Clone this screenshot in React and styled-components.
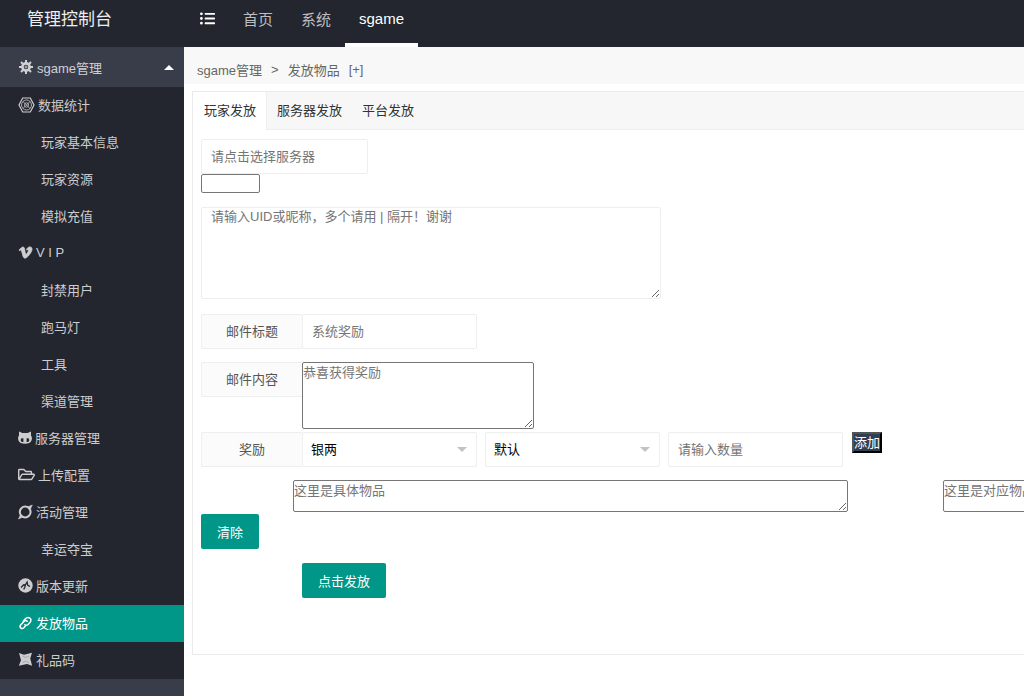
import styled, { createGlobalStyle } from "styled-components";
import { FaListUl, FaRegFolderOpen, FaVimeoV } from "react-icons/fa";

const GlobalStyle = createGlobalStyle`
  * {
    box-sizing: border-box;
  }
  body {
    margin: 0;
    background: #fff;
    overflow: hidden;
  }
  body, button, input, select, textarea {
    font-family: "Liberation Sans", "Noto Sans CJK SC", sans-serif;
    font-size: 13px;
  }
`;

const Page = styled.div`
  display: flex;
  flex-direction: column;
  height: 100vh;
`;

const Header = styled.header`
  display: flex;
  flex: none;
  height: 47px;
  background: #23262e;
`;

const Logo = styled.div`
  width: 186px;
  padding-left: 27px;
  color: #eee;
  font-size: 17px;
  line-height: 40px;
`;

const TopNav = styled.nav`
  display: flex;
`;

const TopLink = styled.a`
  display: flex;
  align-items: center;
  padding: 0 14px 7px;
  border-bottom: 4px solid ${({ $active }) => ($active ? "#fff" : "transparent")};
  color: ${({ $active }) => ($active ? "#fff" : "#bdbec0")};
  font-size: 15px;
  text-decoration: none;
`;

const Body = styled.div`
  display: flex;
  flex: 1;
  min-height: 0;
`;

const Sidebar = styled.nav`
  flex: none;
  width: 184px;
  background: #393d49;
`;

const Group = styled.a`
  display: flex;
  align-items: center;
  gap: 4px;
  height: 40px;
  padding: 0 10px 0 19px;
  color: #cfd0d3;
  text-decoration: none;

  &::after {
    content: "";
    margin-left: auto;
    border: 5px solid transparent;
    border-top-width: 0;
    border-bottom-color: #fff;
  }
`;

const Menu = styled.ul`
  margin: 0;
  padding: 0;
  list-style: none;
  background: #23262e;
`;

const MenuLink = styled.a`
  display: flex;
  align-items: center;
  gap: 3px;
  height: 37px;
  padding: 0 0 2px ${({ $child }) => ($child ? "41px" : "18px")};
  background: ${({ $active }) => ($active ? "#009688" : "transparent")};
  color: ${({ $active }) => ($active ? "#fff" : "#cccdcf")};
  text-decoration: none;
`;

const Main = styled.main`
  flex: 1;
  min-width: 0;
  overflow: hidden;
`;

const Breadcrumb = styled.div`
  display: flex;
  align-items: center;
  gap: 9px;
  height: 37px;
  padding: 8px 13px 0;
  background: #f8f8f8;
  color: #666;

  a {
    color: inherit;
    text-decoration: none;
  }
`;

const Panel = styled.section`
  margin: 7px 0 0 8px;
  border: 1px solid #eaeaea;
  border-right: 0;
`;

const Tabs = styled.div`
  display: flex;
  height: 38px;
  border-bottom: 1px solid #eee;
  background: #f7f7f7;
`;

const Tab = styled.button`
  height: 38px;
  padding: 0 10px 3px;
  border: 0;
  background: transparent;
  color: #333;

  &[aria-selected="true"] {
    padding-left: 11px;
    border-right: 1px solid #eee;
    background: #fff;
  }
`;

const Form = styled.form`
  padding: 9px 8px 56px;
`;

const Line = styled.div`
  display: flex;
  align-items: flex-start;
  margin-bottom: ${({ $space }) => $space || 0}px;
  padding-left: ${({ $indent }) => $indent || 0}px;
`;

const Label = styled.label`
  flex: none;
  width: 101px;
  height: 35px;
  border: 1px solid #eee;
  border-right: 0;
  border-radius: 2px 0 0 2px;
  background: #fbfbfb;
  color: #555;
  line-height: 33px;
  text-align: center;
`;

const Input = styled.input`
  flex: none;
  width: ${({ $width }) => $width}px;
  height: 35px;
  padding: 0 9px;
  border: 1px solid #eee;
  border-radius: 2px;
  outline: 0;

  &::placeholder {
    color: #757575;
  }
`;

const SmallInput = styled.input`
  width: 59px;
  height: 19px;
  border: 1px solid #767676;
  border-radius: 2px;
`;

const TextArea = styled.textarea`
  display: block;
  flex: none;
  width: ${({ $width }) => $width}px;
  height: ${({ $height }) => $height}px;
  padding: 2px 0;
  border: 1px solid #767676;
  border-radius: 2px;
  line-height: 16px;

  &::placeholder {
    color: #757575;
  }
`;

const PlayerArea = styled(TextArea)`
  padding: 1px 9px;
  border-color: #eee;
`;

const SelectBox = styled.div`
  display: flex;
  align-items: center;
  flex: none;
  width: 175px;
  height: 35px;
  padding-right: 9px;
  border: 1px solid #eee;
  border-radius: 2px;
  margin-right: 8px;

  &::after {
    content: "";
    border: 5px solid transparent;
    border-bottom-width: 0;
    border-top-color: #c2c2c2;
    pointer-events: none;
  }
`;

const Select = styled.select`
  flex: 1;
  height: 100%;
  padding: 0 8px;
  border: 0;
  outline: 0;
  appearance: none;
  background: transparent;
  color: #000;
`;

const AddButton = styled.button`
  margin-left: 9px;
  width: 30px;
  height: 21px;
  padding: 0;
  border: 2px outset #000;
  background: #2f4056;
  color: #fff;
  line-height: 17px;
`;

const Button = styled.button`
  height: 35px;
  padding: 0 16px;
  border: 0;
  border-radius: 2px;
  background: #009688;
  color: #fff;
`;

const ItemsLine = styled(Line)`
  gap: 95px;
  padding-left: 92px;
`;

const Gear = () => (
  <svg width="14" height="14" viewBox="0 0 14 14" fill="none" stroke="currentColor">
    <circle cx="7" cy="7" r="3.6" strokeWidth="2.6" />
    <path
      d="M7 0v3M7 11v3M0 7h3M11 7h3M2 2l2.200 2.200M9.800 9.800 12 12M12 2 9.800 4.200M4.200 9.800 2 12"
      strokeWidth="2"
    />
    <circle cx="7" cy="7" r="1" strokeWidth=".8" />
  </svg>
);

const Hexagon = () => (
  <svg width="17" height="16" viewBox="0 0 17 16" fill="none" stroke="currentColor">
    <path d="M4.700 1h7.600L16 8l-3.700 7H4.700L1 8z" strokeWidth="1.200" />
    <circle cx="8.500" cy="8" r="5" strokeWidth=".8" />
    <path d="m5 4.500 7 7M12 4.500l-7 7" strokeWidth=".8" />
    <circle cx="8.500" cy="8" r="2.200" strokeWidth=".7" />
  </svg>
);

const Cat = () => (
  <svg width="14" height="13" viewBox="0 0 14 13" fill="currentColor" fillRule="evenodd">
    <path d="M1 .5 4.400 2h5.200L13 .5v4c1 1.200 1.200 3.100.5 5C12.600 12 10.500 12.700 7 12.700S1.400 12 .5 9.500C-.2 7.600 0 5.700 1 4.500zM4 7.200c-1.700 0-1.700 3.800.2 3.800h5.600c1.900 0 1.900-3.800.2-3.800z" />
    <path d="M5.400 7h3.200v4.200H5.400z" />
  </svg>
);

const Ring = () => (
  <svg width="15" height="16" viewBox="0 0 15 16" fill="none" stroke="currentColor">
    <circle cx="7.200" cy="8" r="5.400" strokeWidth="2" />
    <path d="M10 2.800 14.300 1 12.500 5zM4.500 13.200.5 15l1.800-4z" fill="currentColor" strokeWidth=".6" />
  </svg>
);

const Compass = () => (
  <svg width="15" height="15" viewBox="0 0 15 15">
    <circle cx="7.500" cy="7.500" r="7.200" fill="currentColor" />
    <path
      d="M3 9.500 5.800 6.800l1.500.2 1.800-3 .5 3 2.400 1.500M7.300 7l-.5 2.500-1.200 1.800"
      fill="none"
      stroke="#23262e"
      strokeWidth="1.300"
    />
  </svg>
);

const Link = () => (
  <svg width="15" height="15" viewBox="0 0 15 15" fill="none" stroke="currentColor" strokeWidth="1.500" strokeLinecap="round">
    <path d="M5.200 6.200 7.400 3.700c3-3 7.400.3 4.700 3.600l-2 2.200c-1.100 1-2.400.9-3.200.2" />
    <path d="M9.200 6.200c-1-.9-2.300-.8-3.200.2L3 9.500c-2.400 2.700.6 5.200 2.900 3.200L7.300 11" />
  </svg>
);

const Star = () => (
  <svg width="15" height="15" viewBox="0 0 15 15" fill="currentColor">
    <path d="m1 1 5 1.700L14 .8 12.200 6.500l1.900 7.300-5.100-1.700-8.200 1.700L3 8.300z" />
    <path d="m4.500 4 3 1.500L11 4M11 11l-3-2-3.500 1.500" fill="none" stroke="#8b8d92" strokeWidth=".6" />
  </svg>
);

const menu = [
  { text: "数据统计", icon: <Hexagon /> },
  { text: "玩家基本信息" },
  { text: "玩家资源" },
  { text: "模拟充值" },
  { text: "V I P", icon: <FaVimeoV size={15} stroke="currentColor" strokeWidth={24} /> },
  { text: "封禁用户" },
  { text: "跑马灯" },
  { text: "工具" },
  { text: "渠道管理" },
  { text: "服务器管理", icon: <Cat /> },
  { text: "上传配置", icon: <FaRegFolderOpen size={17} /> },
  { text: "活动管理", icon: <Ring /> },
  { text: "幸运夺宝" },
  { text: "版本更新", icon: <Compass /> },
  { text: "发放物品", icon: <Link />, active: true },
  { text: "礼品码", icon: <Star /> },
];

const App = () => {
  return (
    <Page>
      <GlobalStyle />
      <Header>
        <Logo>管理控制台</Logo>
        <TopNav>
          <TopLink href="#menu" aria-label="菜单">
            <FaListUl size={15} color="#fff" />
          </TopLink>
          <TopLink href="#home">首页</TopLink>
          <TopLink href="#system">系统</TopLink>
          <TopLink href="#sgame" $active>
            sgame
          </TopLink>
        </TopNav>
      </Header>
      <Body>
        <Sidebar>
          <Group href="#sgame">
            <Gear />
            sgame管理
          </Group>
          <Menu>
            {menu.map(({ text, icon, active }) => (
              <li key={text}>
                <MenuLink href="#item" $child={!icon} $active={active}>
                  {icon}
                  {text}
                </MenuLink>
              </li>
            ))}
          </Menu>
        </Sidebar>
        <Main>
          <Breadcrumb>
            <a href="#sgame">sgame管理</a>
            <span>&gt;</span>
            <a href="#send">发放物品</a>
            <a href="#add">[+]</a>
          </Breadcrumb>
          <Panel>
            <Tabs role="tablist">
              <Tab role="tab" aria-selected="true">
                玩家发放
              </Tab>
              <Tab role="tab">服务器发放</Tab>
              <Tab role="tab">平台发放</Tab>
            </Tabs>
            <Form onSubmit={(e) => e.preventDefault()}>
              <Line>
                <Input $width={167} placeholder="请点击选择服务器" aria-label="服务器" />
              </Line>
              <Line $space={14}>
                <SmallInput aria-label="服务器编号" />
              </Line>
              <Line $space={15}>
                <PlayerArea
                  $width={460}
                  $height={92}
                  placeholder="请输入UID或昵称，多个请用 | 隔开！谢谢"
                  aria-label="玩家"
                />
              </Line>
              <Line $space={13}>
                <Label htmlFor="title">邮件标题</Label>
                <Input id="title" $width={175} placeholder="系统奖励" />
              </Line>
              <Line $space={3}>
                <Label htmlFor="content">邮件内容</Label>
                <TextArea id="content" $width={232} $height={67} placeholder="恭喜获得奖励" />
              </Line>
              <Line $space={13}>
                <Label htmlFor="reward">奖励</Label>
                <SelectBox>
                  <Select id="reward">
                    <option>银两</option>
                  </Select>
                </SelectBox>
                <SelectBox>
                  <Select aria-label="类型">
                    <option>默认</option>
                  </Select>
                </SelectBox>
                <Input $width={175} placeholder="请输入数量" aria-label="数量" />
                <AddButton type="button">添加</AddButton>
              </Line>
              <ItemsLine $space={2}>
                <TextArea $width={555} $height={32} placeholder="这里是具体物品" aria-label="具体物品" />
                <TextArea $width={555} $height={32} placeholder="这里是对应物品" aria-label="对应物品" />
              </ItemsLine>
              <Line $space={14}>
                <Button type="button">清除</Button>
              </Line>
              <Line $indent={101}>
                <Button type="submit">点击发放</Button>
              </Line>
            </Form>
          </Panel>
        </Main>
      </Body>
    </Page>
  );
};

export default App;
